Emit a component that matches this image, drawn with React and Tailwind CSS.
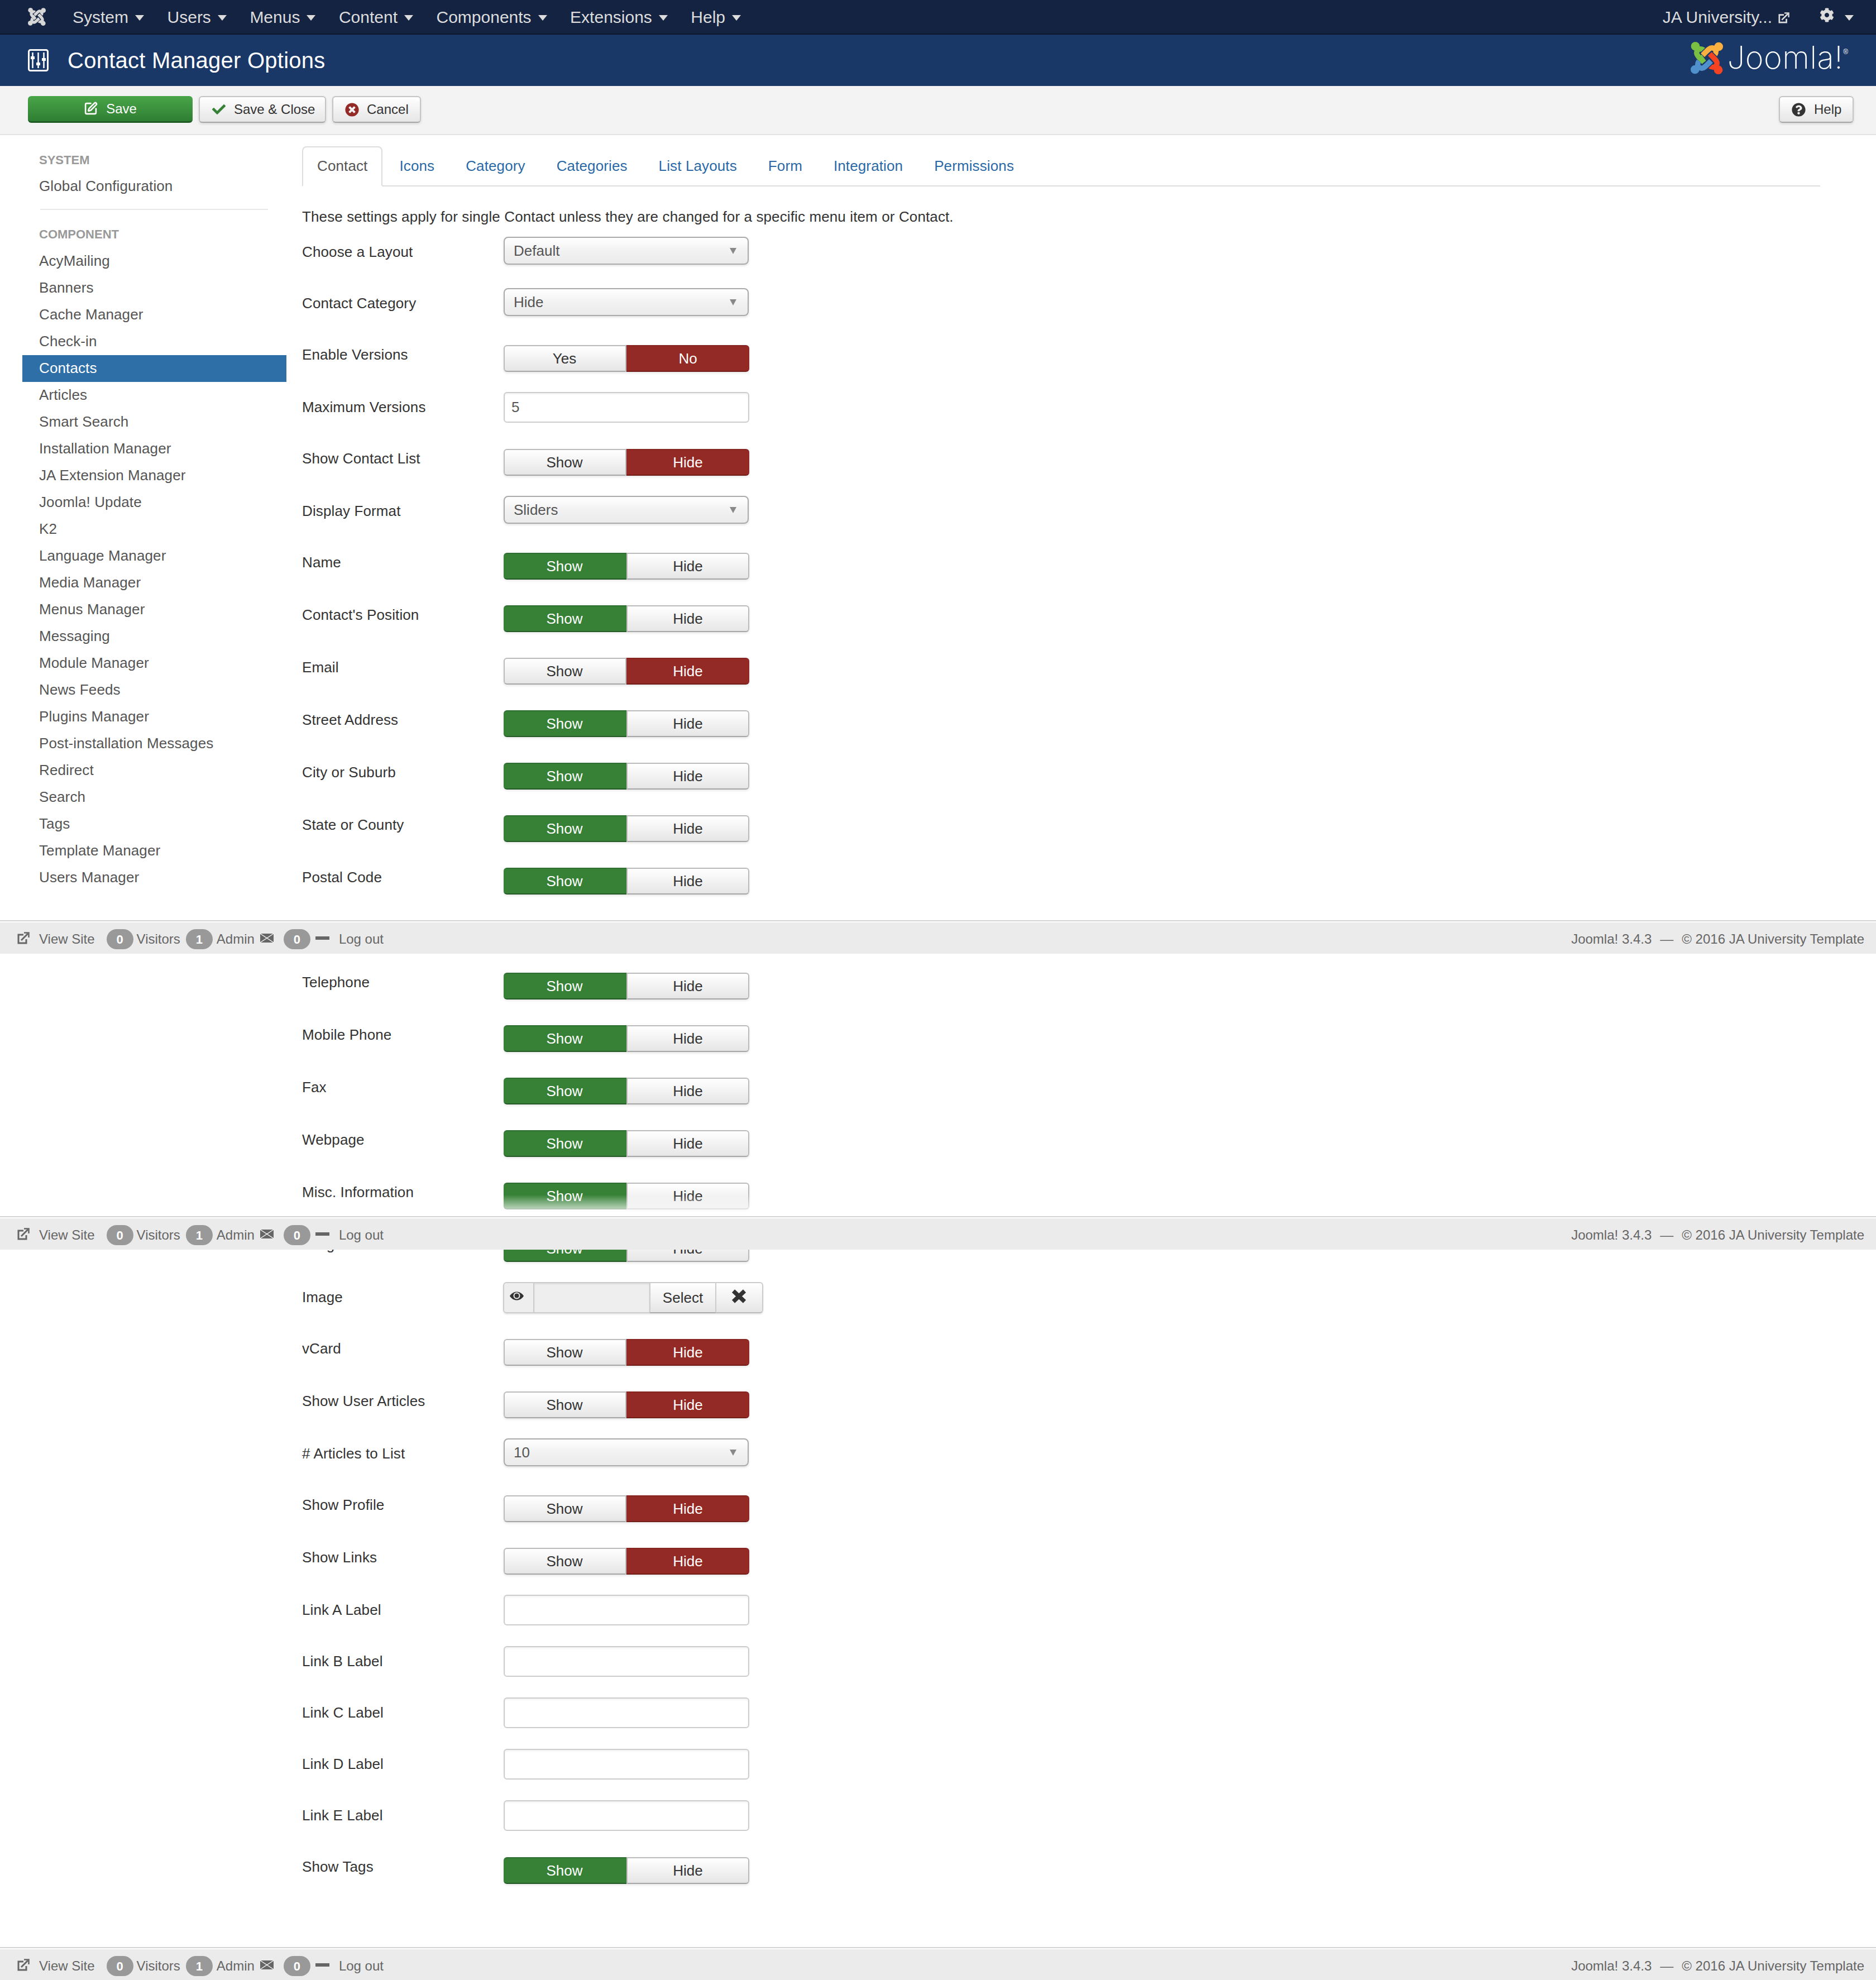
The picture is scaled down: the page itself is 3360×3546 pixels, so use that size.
import React from "react"
import { FaCheck, FaTimesCircle, FaQuestionCircle, FaCog } from "react-icons/fa"
import { SquarePen } from "lucide-react"

const menu = ["System", "Users", "Menus", "Content", "Components", "Extensions", "Help"]
const tabs = ["Icons", "Category", "Categories", "List Layouts", "Form", "Integration", "Permissions"]
const components = [
  "AcyMailing", "Banners", "Cache Manager", "Check-in", "Contacts", "Articles", "Smart Search",
  "Installation Manager", "JA Extension Manager", "Joomla! Update", "K2", "Language Manager",
  "Media Manager", "Menus Manager", "Messaging", "Module Manager", "News Feeds", "Plugins Manager",
  "Post-installation Messages", "Redirect", "Search", "Tags", "Template Manager", "Users Manager",
]

// Joomla mark, one hook repeated four times around the centre
const hook = "M112 80 C92 66 74 74 72 94 C71 106 82 116 112 146"
const JoomlaMark = ({ className, colors, gap }) => (
  <svg viewBox="40 34 176 178" className={className}>
    {colors.map((color, i) => (
      <g key={i} transform={`rotate(${i * 90} 128 123)`}>
        <path d={hook} fill="none" stroke={gap} strokeWidth="38" strokeLinecap="butt" />
        <path d={hook} fill="none" stroke={color} strokeWidth="29" strokeLinecap="butt" />
        <circle cx="65" cy="58" r="24" fill={color} />
        <circle cx="78" cy="74" r="17" fill={color} />
      </g>
    ))}
    <path d="M88 112 L112 146" fill="none" stroke={colors[0]} strokeWidth="29" />
  </svg>
)

const OutIcon = ({ className }) => (
  <svg viewBox="0 0 22 22" fill="none" stroke="currentColor" className={className}>
    <path d="M11 5H2v15h14v-7" strokeWidth="3" />
    <path d="M7 15 19 3" strokeWidth="3" />
    <path d="M12 1.5h8.5V10" strokeWidth="2.5" />
  </svg>
)

const Caret = ({ className }) => (
  <span className={`inline-block w-0 h-0 border-x-[8px] border-t-[10px] border-x-transparent ${className}`} />
)

const TitleIcon = () => (
  <svg viewBox="0 0 37 40" fill="none" stroke="white" className="w-[37px] h-[40px]">
    <rect x="1.5" y="1.5" width="34" height="37" rx="3" strokeWidth="3" />
    <path d="M8.5 6v28M18.5 6v28M28.5 6v28" strokeWidth="2.5" />
    <rect x="5" y="13" width="7" height="5" fill="white" stroke="none" />
    <rect x="15" y="24" width="7" height="5" fill="white" stroke="none" />
    <rect x="25" y="16" width="7" height="5" fill="white" stroke="none" />
  </svg>
)

const TopBar = () => (
  <div className="h-[62px] bg-[#132341] border-b-2 border-[#0c1729] flex items-center pl-[50px] pr-[40px] text-[30px] text-[#dcdcdc]">
    <JoomlaMark className="w-[32px] h-[32px]" colors={["#d6d6d6", "#d6d6d6", "#d6d6d6", "#d6d6d6"]} gap="#132341" />
    <div className="flex items-center ml-[48px] gap-[41.5px]">
      {menu.map((item) => (
        <div key={item} className="flex items-center gap-[12px]">
          <span>{item}</span>
          <Caret className="border-t-[#dcdcdc] mt-[4px]" />
        </div>
      ))}
    </div>
    <div className="ml-auto flex items-center">
      <span>JA University...</span>
      <OutIcon className="w-[20px] h-[20px] ml-[11px] mt-[3px]" />
      <FaCog className="w-[26px] h-[26px] ml-[54px] -mt-[6px]" />
      <Caret className="border-t-[#dcdcdc] ml-[19px] mt-[4px]" />
    </div>
  </div>
)

const TitleBar = () => (
  <div className="h-[92px] bg-[#1a3867] flex items-center pl-[50px] pr-[50px]">
    <TitleIcon />
    <h1 className="ml-[34px] text-[40px] tracking-[0.25px] text-white">Contact Manager Options</h1>
    <div className="ml-auto flex items-center -mt-[8px]">
      <JoomlaMark className="w-[58px] h-[58px]" colors={["#7ac143", "#fbb040", "#f44321", "#5091cd"]} gap="#1a3867" />
      <span className="ml-[8px] -mt-[3px] text-[56px] tracking-[0.5px] leading-none font-extralight text-white font-['Inter',sans-serif]">Joomla!</span>
      <span className="self-start mt-[12px] text-[12px] leading-none text-white">®</span>
    </div>
  </div>
)

const lightBtn = "h-[48px] flex items-center rounded-[6px] border-2 border-[#c4c4c4] border-b-[#a6a6a6] bg-linear-to-b from-white to-[#e6e6e6] shadow-[0_2px_4px_rgba(0,0,0,0.12)] text-[24px] text-[#333]"

const Toolbar = () => (
  <div className="h-[88px] bg-[#f3f3f3] border-b-2 border-[#e3e3e3] flex items-center pl-[50px] pr-[40px] pb-[2px]">
    <button className="w-[295px] h-[48px] flex items-center justify-center gap-[15px] rounded-[6px] border-b-[3px] border-[#1f5b23] bg-linear-to-b from-[#49a549] to-[#2f7f32] text-[24px] text-white">
      <SquarePen className="w-[25px] h-[25px]" strokeWidth={2.5} />
      <span>Save</span>
    </button>
    <button className={`${lightBtn} w-[228px] ml-[11px] pl-[22px]`}>
      <FaCheck className="w-[24px] h-[24px] text-[#378137]" />
      <span className="ml-[15px]">Save &amp; Close</span>
    </button>
    <button className={`${lightBtn} w-[159px] ml-[11px] pl-[21px]`}>
      <FaTimesCircle className="w-[25px] h-[25px] text-[#942a25]" />
      <span className="ml-[14px]">Cancel</span>
    </button>
    <button className={`${lightBtn} w-[134px] ml-auto pl-[21px]`}>
      <FaQuestionCircle className="w-[25px] h-[25px] text-[#333]" />
      <span className="ml-[15px]">Help</span>
    </button>
  </div>
)

const Sidebar = () => (
  <aside className="w-[473px] ml-[40px] pt-[27px] text-[26px] tracking-[0.12px] text-[#555]">
    <div className="pl-[30px] h-[36px] leading-[36px] text-[22px] tracking-normal font-bold text-[#999]">SYSTEM</div>
    <div className="pl-[30px] mt-[4px] h-[48px] leading-[48px]">Global Configuration</div>
    <div className="ml-[32px] w-[408px] h-[2px] mt-[17px] bg-[#e8e8e8]" />
    <div className="pl-[30px] mt-[26px] h-[36px] leading-[36px] text-[22px] tracking-normal font-bold text-[#999]">COMPONENT</div>
    <ul className="mt-[6px]">
      {components.map((name) => (
        <li key={name} className={`pl-[30px] h-[48px] leading-[46px] ${name === "Contacts" ? "bg-[#2f6fa8] text-white" : ""}`}>
          {name}
        </li>
      ))}
    </ul>
  </aside>
)

const Tabs = () => (
  <div className="h-[72px] border-b-2 border-[#ddd] flex text-[26px] tracking-[0.12px]">
    <div className="h-[72px] px-[25px] rounded-t-[8px] border-2 border-[#ddd] border-b-white bg-white text-[#555] leading-[66px]">Contact</div>
    {tabs.map((tab) => (
      <div key={tab} className="ml-[4px] px-[26px] text-[#2a69a6] leading-[70px]">{tab}</div>
    ))}
  </div>
)

const Row = ({ label, tall, children }) => (
  <div className={`relative flex text-[26px] text-[#333] ${tall ? "h-[94px]" : "h-[92px]"}`}>
    <label className="w-[361px] mt-[10px] h-[36px] leading-[34px] tracking-[0.12px]">{label}</label>
    {children}
  </div>
)

const Select = ({ label, value }) => (
  <Row label={label}>
    <div className="w-[439px] h-[50px] pl-[16px] pr-[20px] flex items-center justify-between rounded-[8px] border-2 border-[#aaa] bg-linear-to-b from-white via-[#f2f2f2] to-[#ebebeb] shadow-[0_2px_4px_rgba(0,0,0,0.12)] text-[#555]">
      <span>{value}</span>
      <span className="w-0 h-0 border-x-[6px] border-t-[11px] border-x-transparent border-t-[#888]" />
    </div>
  </Row>
)

const TextField = ({ label, value = "" }) => (
  <Row label={label}>
    <input
      readOnly
      value={value}
      className="w-[440px] h-[55px] px-[12px] rounded-[6px] border-2 border-[#ccc] bg-white shadow-[inset_0_2px_3px_rgba(0,0,0,0.06)] text-[26px] text-[#555] outline-none"
    />
  </Row>
)

const offSide = "border-2 border-[#bbb] border-b-[#a6a6a6] bg-linear-to-b from-white to-[#e6e6e6] text-[#333]"
const greenSide = "border-t-2 border-b-2 border-t-[#2f6f31] border-b-[#235a26] bg-[#378137] text-white"
const redSide = "border-t-2 border-b-2 border-t-[#852420] border-b-[#741e1a] bg-[#942a25] text-white"

// on = which half is lit: "left" is green, "right" is red
const Toggle = ({ label, left = "Show", right = "Hide", on, fade }) => (
  <Row label={label} tall>
    <div className="mt-[10px] w-[440px] h-[48px] flex text-[26px] shadow-[0_2px_4px_rgba(0,0,0,0.1)] rounded-[6px]">
      <div className={`w-[220px] pr-[2px] flex items-center justify-center rounded-l-[6px] ${on === "left" ? greenSide : offSide}`}>{left}</div>
      <div className={`w-[220px] flex items-center justify-center rounded-r-[6px] ${on === "right" ? redSide : offSide}`}>{right}</div>
    </div>
    {fade && <div className="absolute left-0 right-0 top-[32px] h-[38px] bg-linear-to-b from-white/0 to-white" />}
  </Row>
)

const ImageField = () => (
  <Row label="Image">
    <div className="w-[466px] h-[56px] -ml-[1px] flex rounded-[6px] shadow-[0_2px_3px_rgba(0,0,0,0.1)] text-[26px]">
      <div className="w-[56px] pt-[15px] pl-[10px] rounded-l-[6px] border-2 border-[#ccc] bg-[#eee]">
        <svg viewBox="0 0 25 16" className="w-[25px] h-[16px]">
          <path d="M0 8C6-2 19-2 25 8 19 18 6 18 0 8Z" fill="#333" />
          <circle cx="12.5" cy="7.5" r="6" fill="#eee" />
          <circle cx="12.5" cy="7.5" r="4" fill="#333" />
        </svg>
      </div>
      <div className="w-[206px] border-y-2 border-[#ccc] bg-[#eee] shadow-[inset_0_2px_3px_rgba(0,0,0,0.08)]" />
      <div className="w-[120px] flex items-center justify-center border-2 border-[#ccc] border-b-[#aaa] bg-linear-to-b from-white to-[#e6e6e6] text-[#333]">Select</div>
      <div className="w-[84px] pt-[11px] pl-[27px] rounded-r-[6px] border-2 border-l-0 border-[#ccc] border-b-[#bbb] bg-linear-to-b from-white to-[#e6e6e6]">
        <svg viewBox="0 0 27 25" className="w-[27px] h-[25px]">
          <path d="M3.5 3 23.5 22M23.5 3 3.5 22" stroke="#333" strokeWidth="7.5" fill="none" />
        </svg>
      </div>
    </div>
  </Row>
)

const Badge = ({ children, className }) => (
  <span className={`w-[48px] h-[36px] rounded-[18px] bg-[#999] text-white text-[22px] font-bold flex items-center justify-center ${className}`}>{children}</span>
)

const StatusBar = ({ className = "" }) => (
  <div className={`relative z-10 h-[60px] border-t-2 border-[#d4d4d4] pt-[2px] bg-white shrink-0 ${className}`}>
    <div className="h-[56px] pt-[4px] bg-[#ebebeb] flex items-center pl-[31px] pr-[21px] text-[24px] text-[#666]">
      <OutIcon className="w-[22px] h-[22px] -mt-[4px]" />
      <span className="ml-[17px]">View Site</span>
      <Badge className="ml-[21px]">0</Badge>
      <span className="ml-[6px]">Visitors</span>
      <Badge className="ml-[10px]">1</Badge>
      <span className="ml-[7px]">Admin</span>
      <svg viewBox="0 0 24 16" className="w-[24px] h-[16px] ml-[10px] -mt-[4px]">
        <rect width="24" height="16" fill="#666" />
        <path d="M0 0 24 16M24 0 0 16" stroke="white" strokeWidth="1.2" />
      </svg>
      <Badge className="ml-[18px]">0</Badge>
      <span className="ml-[9px] w-[25px] h-[6px] bg-[#666] -mt-[4px]" />
      <span className="ml-[17px]">Log out</span>
      <div className="ml-auto flex gap-[15px]">
        <span>Joomla! 3.4.3</span>
        <span>—</span>
        <span>© 2016 JA University Template</span>
      </div>
    </div>
  </div>
)

export default function App() {
  return (
    <div className="h-[3546px] overflow-hidden bg-white font-['Liberation_Sans',Arial,sans-serif]">
      <TopBar />
      <TitleBar />
      <Toolbar />

      <section className="flex">
        <Sidebar />
        <div className="flex-1 ml-[28px] pr-[100px] pt-[20px]">
          <Tabs />
          <p className="mt-[36px] mb-[18px] h-[36px] leading-[36px] text-[26px] tracking-[0.12px] text-[#333]">
            These settings apply for single Contact unless they are changed for a specific menu item or Contact.
          </p>
          <Select label="Choose a Layout" value="Default" />
          <Select label="Contact Category" value="Hide" />
          <Toggle label="Enable Versions" left="Yes" right="No" on="right" />
          <TextField label="Maximum Versions" value="5" />
          <Toggle label="Show Contact List" on="right" />
          <Select label="Display Format" value="Sliders" />
          <Toggle label="Name" on="left" />
          <Toggle label="Contact's Position" on="left" />
          <Toggle label="Email" on="right" />
          <Toggle label="Street Address" on="left" />
          <Toggle label="City or Suburb" on="left" />
          <Toggle label="State or County" on="left" />
          <Toggle label="Postal Code" on="left" />
        </div>
      </section>

      <StatusBar className="mt-[10px]" />

      <section className="ml-[541px] pt-[24px]">
        <Toggle label="Telephone" on="left" />
        <Toggle label="Mobile Phone" on="left" />
        <Toggle label="Fax" on="left" />
        <Toggle label="Webpage" on="left" />
        <Toggle label="Misc. Information" on="left" fade />
      </section>

      <StatusBar className="-mt-[24px] -mb-[36px]" />

      <section className="ml-[541px] pb-[77px]">
        <Toggle label="Image" on="left" />
        <ImageField />
        <Toggle label="vCard" on="right" />
        <Toggle label="Show User Articles" on="right" />
        <Select label="# Articles to List" value="10" />
        <Toggle label="Show Profile" on="right" />
        <Toggle label="Show Links" on="right" />
        <TextField label="Link A Label" />
        <TextField label="Link B Label" />
        <TextField label="Link C Label" />
        <TextField label="Link D Label" />
        <TextField label="Link E Label" />
        <Toggle label="Show Tags" on="left" />
      </section>

      <StatusBar />
    </div>
  )
}
